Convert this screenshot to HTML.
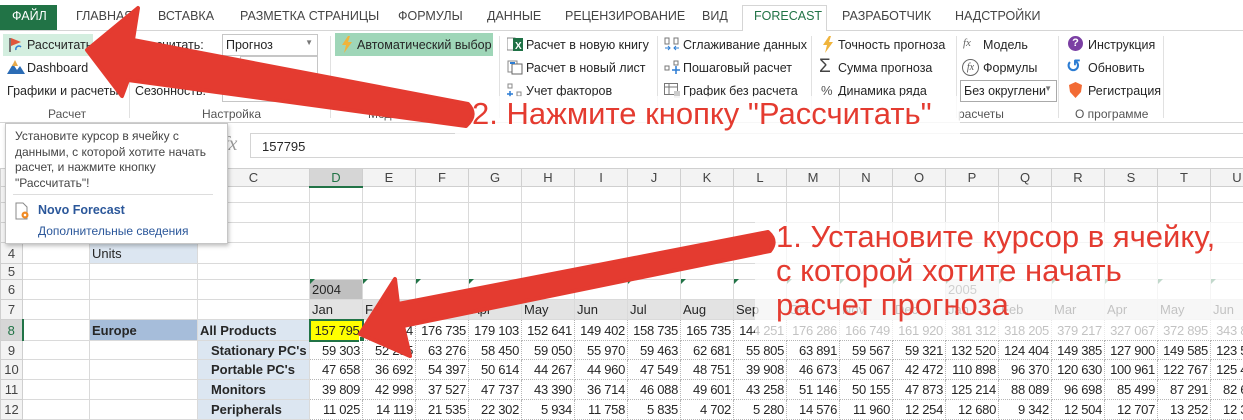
<!DOCTYPE html>
<html><head><meta charset="utf-8"><style>
*{margin:0;padding:0;box-sizing:border-box}
body{width:1243px;height:407px;overflow:hidden;background:#fff;font-family:"Liberation Sans","DejaVu Sans",sans-serif;position:relative;color:#262626}
.a{position:absolute;white-space:nowrap}
.tab{position:absolute;top:9px;font-size:12.5px;color:#444}
.r{font-size:12.5px}
.gl{position:absolute;top:107px;font-size:12px;color:#555}
.sep{position:absolute;top:36px;width:1px;height:82px;background:#e1e1e1}
table{position:absolute;left:0;top:168px;width:1263px;border-collapse:collapse;table-layout:fixed;font-size:13px}
td{border:1px solid #dadada;padding:0 2px;overflow:hidden;white-space:nowrap;text-align:right}
tr.h td{background:#f3f3f3;text-align:center;color:#444;font-size:13px;border-color:#cfcfcf}
td.rh{background:#f3f3f3;text-align:center;color:#444;border-color:#cfcfcf;padding:0}
td.n{border:1px dotted #b5b5b5;letter-spacing:-0.3px}
td.m{background:#e3e3e3;text-align:left}
td.lb{background:#dce6f1;text-align:left;font-weight:bold}
.ic{position:absolute}
</style></head><body>
<!-- tabs -->
<div class="a" style="left:0;top:5px;width:57px;height:25px;background:#217346"></div>
<div class="tab" style="left:12px;color:#fff">ФАЙЛ</div>
<div class="tab" style="left:76px">ГЛАВНАЯ</div>
<div class="tab" style="left:158px">ВСТАВКА</div>
<div class="tab" style="left:240px">РАЗМЕТКА СТРАНИЦЫ</div>
<div class="tab" style="left:398px">ФОРМУЛЫ</div>
<div class="tab" style="left:487px">ДАННЫЕ</div>
<div class="tab" style="left:565px">РЕЦЕНЗИРОВАНИЕ</div>
<div class="tab" style="left:702px">ВИД</div>
<div class="a" style="left:742px;top:5px;width:85px;height:26px;border:1px solid #d5d5d5;border-bottom:none;background:#fff;z-index:2"></div>
<div class="tab" style="left:754px;color:#217346;z-index:3">FORECAST</div>
<div class="tab" style="left:842px">РАЗРАБОТЧИК</div>
<div class="tab" style="left:955px">НАДСТРОЙКИ</div>
<div class="a" style="left:0;top:30px;width:1243px;height:1px;background:#d5d5d5"></div>
<div class="a" style="left:0;top:122px;width:1243px;height:1px;background:#d5d5d5"></div>
<!-- ribbon -->
<div class="a" style="left:3px;top:34px;width:90px;height:22px;background:#d3eedf"></div>
<svg class="ic" style="left:8px;top:37px" width="16" height="16"><rect x="1" y="1" width="2" height="14" fill="#777"/><path d="M3 1 L13 5 L3 9Z" fill="#e0543a"/><path d="M8 13 A3 3 0 0 1 13 10" stroke="#2b7cd3" fill="none" stroke-width="1.5"/></svg>
<div class="a r" style="left:27px;top:38px">Рассчитать</div>
<svg class="ic" style="left:7px;top:59px" width="18" height="16"><path d="M0 15 L6 5 L10 11 L13 7 L18 15Z" fill="#2b6cb5"/><path d="M5 7 L8 1 L11 7Z" fill="#e8a94a"/></svg>
<div class="a r" style="left:27px;top:61px">Dashboard</div>
<div class="a r" style="left:7px;top:84px">Графики и расчеты</div>
<div class="gl" style="left:48px">Расчет</div>
<div class="sep" style="left:129px"></div>
<div class="a r" style="left:135px;top:38px">Рассчитать:</div>
<div class="a" style="left:222px;top:34px;width:96px;height:22px;border:1px solid #c6c6c6;font-size:12.5px;padding:3px 3px">Прогноз<span style="position:absolute;right:4px;top:3px;font-size:8px;color:#777">▼</span></div>
<div class="a" style="left:240px;top:56px;width:78px;height:23px;border:1px solid #c6c6c6;font-size:12.5px;padding:4px 3px">12</div>
<div class="a r" style="left:135px;top:84px">Сезонность:</div>
<div class="a" style="left:222px;top:80px;width:96px;height:22px;border:1px solid #c6c6c6;font-size:12.5px;padding:3px 3px">Месячная</div>
<div class="gl" style="left:202px">Настройка</div>
<div class="sep" style="left:330px"></div>
<div class="a" style="left:335px;top:33px;width:158px;height:23px;background:#9fd6b8"></div>
<svg class="ic" style="left:341px;top:36px" width="12" height="17"><path d="M7 0 L1 9 L5 9 L3 17 L11 6 L7 6 L9 0Z" fill="#f0b43c"/></svg>
<div class="a r" style="left:357px;top:38px">Автоматический выбор</div>
<div class="gl" style="left:368px">Модель прогноза</div>
<div class="sep" style="left:499px"></div>
<svg class="ic" style="left:507px;top:37px" width="16" height="15"><rect x="0" y="1" width="8" height="12" fill="none" stroke="#888"/><rect x="6" y="1" width="10" height="13" fill="#1e7145"/><text x="8" y="12" font-size="10" fill="#fff" font-family="Liberation Sans" font-weight="bold">X</text></svg>
<div class="a r" style="left:526px;top:38px">Расчет в новую книгу</div>
<svg class="ic" style="left:507px;top:60px" width="16" height="15"><rect x="1" y="1" width="9" height="11" fill="none" stroke="#888"/><rect x="5" y="4" width="10" height="10" fill="#fff" stroke="#666"/><path d="M3 3 h5" stroke="#2b7cd3" stroke-width="2"/></svg>
<div class="a r" style="left:526px;top:61px">Расчет в новый лист</div>
<svg class="ic" style="left:507px;top:83px" width="16" height="15"><rect x="1" y="1" width="4" height="4" fill="none" stroke="#888"/><rect x="10" y="9" width="4" height="4" fill="none" stroke="#888"/><path d="M3 8 v6 M0 11 h6" stroke="#2b7cd3" stroke-width="1.5"/></svg>
<div class="a r" style="left:526px;top:84px">Учет факторов</div>
<div class="sep" style="left:657px"></div>
<svg class="ic" style="left:664px;top:37px" width="16" height="15"><rect x="1" y="1" width="4" height="6" fill="none" stroke="#777"/><rect x="10" y="1" width="4" height="6" fill="none" stroke="#777"/><path d="M1 11 h5 M10 11 h5 M4 9 l2 2 l-2 2 M12 9 l-2 2 l2 2" stroke="#2b7cd3" fill="none"/></svg>
<div class="a r" style="left:683px;top:38px">Сглаживание данных</div>
<svg class="ic" style="left:664px;top:60px" width="16" height="15"><rect x="1" y="6" width="4" height="4" fill="none" stroke="#777"/><rect x="10" y="1" width="4" height="4" fill="none" stroke="#777"/><path d="M12 6 v8 M8 10 h8" stroke="#2b7cd3" stroke-width="1.5"/></svg>
<div class="a r" style="left:683px;top:61px">Пошаговый расчет</div>
<svg class="ic" style="left:664px;top:83px" width="16" height="15"><rect x="0.5" y="0.5" width="13" height="11" fill="none" stroke="#777"/><path d="M0 4 h14 M5 0 v12" stroke="#777"/><rect x="10" y="8" width="6" height="7" fill="#ccc"/></svg>
<div class="a r" style="left:683px;top:84px">График без расчета</div>
<div class="sep" style="left:811px"></div>
<svg class="ic" style="left:822px;top:36px" width="12" height="17"><path d="M7 0 L1 9 L5 9 L3 17 L11 6 L7 6 L9 0Z" fill="#f0b43c"/></svg>
<div class="a r" style="left:838px;top:38px">Точность прогноза</div>
<div class="a" style="left:819px;top:56px;font-size:19px;color:#444">Σ</div>
<div class="a r" style="left:838px;top:61px">Сумма прогноза</div>
<div class="a" style="left:821px;top:83px;font-size:13px;color:#555">%</div>
<div class="a r" style="left:838px;top:84px">Динамика ряда</div>
<div class="sep" style="left:956px"></div>
<div class="a" style="left:963px;top:37px;font-size:11px;color:#666;font-style:italic;font-family:'Liberation Serif',serif">fx</div>
<div class="a r" style="left:983px;top:38px">Модель</div>
<div class="a" style="left:962px;top:59px;width:17px;height:17px;border:1px solid #666;border-radius:50%;font-size:10px;color:#555;font-style:italic;text-align:center;line-height:15px;font-family:'Liberation Serif',serif">fx</div>
<div class="a r" style="left:983px;top:61px">Формулы</div>
<div class="a" style="left:960px;top:80px;width:97px;height:22px;border:1px solid #aaa;font-size:12.5px;padding:3px 3px;overflow:hidden;background:#fff">Без округлени<span style="position:absolute;right:4px;top:3px;font-size:8px;color:#777">▼</span></div>
<div class="gl" style="left:958px">расчеты</div>
<div class="sep" style="left:1058px"></div>
<div class="a" style="left:1068px;top:36px;width:15px;height:15px;border-radius:50%;background:#7b3fa3;color:#fff;font-size:11px;font-weight:bold;text-align:center;line-height:15px">?</div>
<div class="a r" style="left:1088px;top:38px">Инструкция</div>
<div class="a" style="left:1066px;top:56px;font-size:18px;color:#2b7cd3;font-weight:bold">↺</div>
<div class="a r" style="left:1088px;top:61px">Обновить</div>
<svg class="ic" style="left:1069px;top:82px" width="13" height="16"><path d="M6.5 0 L13 3 L12 10 L6.5 16 L1 10 L0 3Z" fill="#f26b35"/></svg>
<div class="a r" style="left:1088px;top:84px">Регистрация</div>
<div class="gl" style="left:1075px">О программе</div>
<div class="sep" style="left:1163px"></div>
<!-- formula bar -->
<div class="a" style="left:223px;top:133px;font-size:20px;color:#999;font-style:italic;font-family:'Liberation Serif',serif">fx</div>
<div class="a" style="left:250px;top:133px;width:995px;height:25px;border:1px solid #d4d4d4"></div>
<div class="a" style="left:262px;top:139px;font-size:13px">157795</div>
<!-- grid -->
<table>
<colgroup><col style="width:22px"><col style="width:67px"><col style="width:108px"><col style="width:112px"><col span="18" style="width:53px"></colgroup>
<tr class="h" style="height:18px"><td></td><td>A</td><td>B</td><td>C</td><td style="background:#d6d6d6;color:#217346;border-bottom:2px solid #217346">D</td><td>E</td><td>F</td><td>G</td><td>H</td><td>I</td><td>J</td><td>K</td><td>L</td><td>M</td><td>N</td><td>O</td><td>P</td><td>Q</td><td>R</td><td>S</td><td>T</td><td>U</td></tr>
<tr style="height:16px"><td class="rh">1</td><td></td><td></td><td></td><td></td><td></td><td></td><td></td><td></td><td></td><td></td><td></td><td></td><td></td><td></td><td></td><td></td><td></td><td></td><td></td><td></td><td></td></tr>
<tr style="height:20px"><td class="rh">2</td><td></td><td></td><td></td><td></td><td></td><td></td><td></td><td></td><td></td><td></td><td></td><td></td><td></td><td></td><td></td><td></td><td></td><td></td><td></td><td></td><td></td></tr>
<tr style="height:20px"><td class="rh">3</td><td></td><td></td><td></td><td></td><td></td><td></td><td></td><td></td><td></td><td></td><td></td><td></td><td></td><td></td><td></td><td></td><td></td><td></td><td></td><td></td><td></td></tr>
<tr style="height:21px"><td class="rh">4</td><td></td><td style="background:#dce6f1;text-align:left">Units</td><td></td><td></td><td></td><td></td><td></td><td></td><td></td><td></td><td></td><td></td><td></td><td></td><td></td><td></td><td></td><td></td><td></td><td></td><td></td></tr>
<tr style="height:16px"><td class="rh">5</td><td></td><td></td><td></td><td></td><td></td><td></td><td></td><td></td><td></td><td></td><td></td><td></td><td></td><td></td><td></td><td></td><td></td><td></td><td></td><td></td><td></td></tr>
<tr style="height:20px"><td class="rh">6</td><td></td><td></td><td></td><td style="background:#c0c0c0;text-align:left;font-size:13px">2004</td><td></td><td></td><td></td><td></td><td></td><td></td><td></td><td></td><td></td><td></td><td></td><td style="background:#e8e8e8;text-align:left;font-size:13px;color:#555">2005</td><td></td><td></td><td></td><td></td><td></td></tr>
<tr style="height:20px"><td class="rh">7</td><td></td><td></td><td></td><td class="m">Jan</td><td class="m">Feb</td><td class="m">Mar</td><td class="m">Apr</td><td class="m">May</td><td class="m">Jun</td><td class="m">Jul</td><td class="m">Aug</td><td class="m">Sep</td><td class="m">Oct</td><td class="m">Nov</td><td class="m">Dec</td><td class="m">Jan</td><td class="m">Feb</td><td class="m">Mar</td><td class="m">Apr</td><td class="m">May</td><td class="m">Jun</td></tr>
<tr style="height:21px"><td class="rh" style="background:#d6d6d6;color:#217346;border-right:2px solid #217346">8</td><td></td><td style="background:#a6bdda;text-align:left;font-weight:bold">Europe</td><td class="lb">All Products</td><td class="n" style="background:#ffff00;border:2px solid #217346">157 795</td><td class="n">171 264</td><td class="n">176 735</td><td class="n">179 103</td><td class="n">152 641</td><td class="n">149 402</td><td class="n">158 735</td><td class="n">165 735</td><td class="n">144 251</td><td class="n">176 286</td><td class="n">166 749</td><td class="n">161 920</td><td class="n">381 312</td><td class="n">318 205</td><td class="n">379 217</td><td class="n">327 067</td><td class="n">372 895</td><td class="n">343 812</td></tr>
<tr style="height:19px"><td class="rh">9</td><td></td><td></td><td class="lb" style="padding-left:13px">Stationary PC's</td><td class="n">59 303</td><td class="n">52 255</td><td class="n">63 276</td><td class="n">58 450</td><td class="n">59 050</td><td class="n">55 970</td><td class="n">59 463</td><td class="n">62 681</td><td class="n">55 805</td><td class="n">63 891</td><td class="n">59 567</td><td class="n">59 321</td><td class="n">132 520</td><td class="n">124 404</td><td class="n">149 385</td><td class="n">127 900</td><td class="n">149 585</td><td class="n">123 512</td></tr>
<tr style="height:20px"><td class="rh">10</td><td></td><td></td><td class="lb" style="padding-left:13px">Portable PC's</td><td class="n">47 658</td><td class="n">36 692</td><td class="n">54 397</td><td class="n">50 614</td><td class="n">44 267</td><td class="n">44 960</td><td class="n">47 549</td><td class="n">48 751</td><td class="n">39 908</td><td class="n">46 673</td><td class="n">45 067</td><td class="n">42 472</td><td class="n">110 898</td><td class="n">96 370</td><td class="n">120 630</td><td class="n">100 961</td><td class="n">122 767</td><td class="n">125 412</td></tr>
<tr style="height:20px"><td class="rh">11</td><td></td><td></td><td class="lb" style="padding-left:13px">Monitors</td><td class="n">39 809</td><td class="n">42 998</td><td class="n">37 527</td><td class="n">47 737</td><td class="n">43 390</td><td class="n">36 714</td><td class="n">46 088</td><td class="n">49 601</td><td class="n">43 258</td><td class="n">51 146</td><td class="n">50 155</td><td class="n">47 873</td><td class="n">125 214</td><td class="n">88 089</td><td class="n">96 698</td><td class="n">85 499</td><td class="n">87 291</td><td class="n">82 612</td></tr>
<tr style="height:20px"><td class="rh">12</td><td></td><td></td><td class="lb" style="padding-left:13px">Peripherals</td><td class="n">11 025</td><td class="n">14 119</td><td class="n">21 535</td><td class="n">22 302</td><td class="n">5 934</td><td class="n">11 758</td><td class="n">5 835</td><td class="n">4 702</td><td class="n">5 280</td><td class="n">14 576</td><td class="n">11 960</td><td class="n">12 254</td><td class="n">12 680</td><td class="n">9 342</td><td class="n">12 504</td><td class="n">12 707</td><td class="n">13 252</td><td class="n">12 300</td></tr>
</table>
<div class="a" style="left:359px;top:336px;width:6px;height:6px;background:#217346;border:1px solid #fff"></div>
<!-- green triangles row 6 -->
<svg class="a" style="left:0;top:279px" width="1243" height="8"><g fill="#217346"><path d="M310 0h5l-5 5z"/><path d="M363 0h5l-5 5z"/><path d="M416 0h5l-5 5z"/><path d="M469 0h5l-5 5z"/><path d="M522 0h5l-5 5z"/><path d="M575 0h5l-5 5z"/><path d="M628 0h5l-5 5z"/><path d="M681 0h5l-5 5z"/><path d="M734 0h5l-5 5z"/><path d="M787 0h5l-5 5z"/><path d="M840 0h5l-5 5z"/><path d="M893 0h5l-5 5z"/><path d="M946 0h5l-5 5z"/><path d="M999 0h5l-5 5z"/><path d="M1052 0h5l-5 5z"/><path d="M1105 0h5l-5 5z"/><path d="M1158 0h5l-5 5z"/><path d="M1211 0h5l-5 5z"/></g></svg>
<!-- tooltip -->
<div class="a" style="left:5px;top:123px;width:223px;height:121px;background:#fff;border:1px solid #c6c6c6;box-shadow:1px 2px 4px rgba(0,0,0,.25)"></div>
<div class="a" style="left:15px;top:129px;font-size:12px;color:#444;line-height:15.5px;white-space:normal;width:205px">Установите курсор в ячейку с данными, с которой хотите начать расчет, и нажмите кнопку "Рассчитать"!</div>
<div class="a" style="left:13px;top:194px;width:200px;height:1px;background:#ddd"></div>
<svg class="ic" style="left:15px;top:202px" width="16" height="18"><path d="M1 1h7l4 4v12H1z" fill="#fff" stroke="#888"/><circle cx="10" cy="13" r="3.5" fill="#f08a24"/><circle cx="10" cy="13" r="1.3" fill="#fff"/></svg>
<div class="a" style="left:38px;top:203px;font-size:12.5px;font-weight:bold;color:#2b579a">Novo Forecast</div>
<div class="a" style="left:38px;top:224px;font-size:12px;color:#2b579a">Дополнительные сведения</div>
<!-- overlays -->
<div class="a" style="left:455px;top:96px;width:505px;height:38px;background:rgba(255,255,255,.8)"></div>
<div class="a" style="left:755px;top:222px;width:488px;height:118px;background:rgba(255,255,255,.72)"></div>
<!-- arrows -->
<svg class="a" style="left:0;top:0" width="1243" height="407">
<g fill="#e43b30" stroke="#e43b30" stroke-linejoin="round" stroke-width="4">
<path d="M87 50 L138 8 L133 40 L468 104 Q478 115 466 126 L128 80 L122 96 Z"/>
<path d="M360 334 L395 279 L398 304 L768 232 Q778 241 770 251 L403 326 L410 356 Z"/>
</g>
</svg>
<div class="a" style="left:472px;top:96px;font-size:31px;color:#e43b30">2. Нажмите кнопку "Рассчитать"</div>
<div class="a" style="left:776px;top:220px;font-size:31px;color:#e43b30;line-height:34px">1. Установите курсор в ячейку,<br>с которой хотите начать<br>расчет прогноза</div>
</body></html>
